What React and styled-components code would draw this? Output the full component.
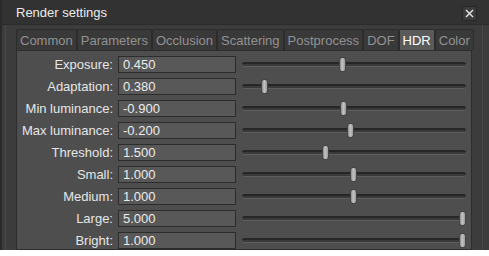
import React from "react";
import styled, { createGlobalStyle } from "styled-components";

const GlobalStyle = createGlobalStyle`
  html, body {
    margin: 0;
    padding: 0;
    background: #ffffff;
  }
  body {
    font-family: "Liberation Sans", Arial, sans-serif;
    font-size: 13px;
  }
`;

const Window = styled.div`
  width: 489px;
  height: 250px;
  overflow: hidden;
  background: #3c3c3c;
  border-left: 2px solid #2a2a2a;
  box-sizing: border-box;
  box-shadow: 0 3px 6px rgba(0, 0, 0, 0.55);
  display: flex;
  flex-direction: column;
`;

const TitleBar = styled.div`
  height: 24px;
  flex: none;
  display: flex;
  align-items: center;
  justify-content: space-between;
  padding: 0 12px 0 14px;
  background: #323232;
  border-bottom: 1px solid #2b2b2b;
  color: #ececec;
  font-size: 13px;
`;

const CloseButton = styled.div`
  width: 15px;
  height: 15px;
  margin-top: 3px;
  box-sizing: border-box;
  border: 1px solid #262626;
  border-radius: 2px;
  background: #3c3c3c;
  display: flex;
  align-items: center;
  justify-content: center;
`;

const Frame = styled.div`
  flex: 1;
  margin: 0 6px 0 3px;
  padding: 4px 10px 0 10px;
  border-left: 1px solid #4a4a4a;
  border-right: 1px solid #4a4a4a;
  display: flex;
  flex-direction: column;
`;

const TabBar = styled.div`
  display: flex;
  height: 21px;
  flex: none;
`;

const Tab = styled.div`
  padding: 0 3px;
  border: 1px solid #2c2c2c;
  border-bottom: none;
  border-radius: 2px 2px 0 0;
  background: ${(p) => (p.$active ? "#5a5a5a" : "#393939")};
  color: ${(p) => (p.$active ? "#ffffff" : "#929292")};
  display: flex;
  align-items: center;
  font-size: 13px;
`;

const Panel = styled.div`
  flex: 1;
  width: 456px;
  box-sizing: border-box;
  background: #4e4e4e;
  border: 1px solid #2d2d2d;
  padding: 5px 0 0 0;
  display: flex;
  flex-direction: column;
  gap: 5px;
`;

const Row = styled.div`
  display: flex;
  align-items: center;
  height: 17px;
`;

const Label = styled.div`
  width: 96px;
  margin-right: 5px;
  text-align: right;
  color: #e6e6e6;
  font-size: 13px;
`;

const Field = styled.div`
  width: 118px;
  height: 17px;
  margin-right: 6px;
  box-sizing: border-box;
  border: 1px solid #2c2c2c;
  background: #585858;
  color: #ececec;
  padding-left: 4px;
  display: flex;
  align-items: center;
  font-size: 13px;
`;

const Slider = styled.div`
  position: relative;
  width: 224px;
  height: 17px;
  display: flex;
  align-items: center;
`;

const Track = styled.div`
  width: 100%;
  height: 5px;
  box-sizing: border-box;
  border-radius: 3px;
  background: #3a3a3a;
  border-top: 2px solid #262626;
  border-bottom: 1px solid #5e5e5e;
`;

const Thumb = styled.div`
  position: absolute;
  top: 1px;
  left: ${(p) => p.$left}px;
  width: 7px;
  height: 15px;
  box-sizing: border-box;
  border-radius: 3px;
  border: 1px solid #444;
  background: linear-gradient(to right, #8a8a8a, #c4c4c4 45%, #9a9a9a);
`;

const tabs = [
  "Common",
  "Parameters",
  "Occlusion",
  "Scattering",
  "Postprocess",
  "DOF",
  "HDR",
  "Color",
];

const settings = [
  { label: "Exposure:", value: "0.450", pos: 97 },
  { label: "Adaptation:", value: "0.380", pos: 19 },
  { label: "Min luminance:", value: "-0.900", pos: 98 },
  { label: "Max luminance:", value: "-0.200", pos: 105 },
  { label: "Threshold:", value: "1.500", pos: 80 },
  { label: "Small:", value: "1.000", pos: 108 },
  { label: "Medium:", value: "1.000", pos: 108 },
  { label: "Large:", value: "5.000", pos: 217 },
  { label: "Bright:", value: "1.000", pos: 217 },
];

export default function App() {
  return (
    <>
      <GlobalStyle />
      <Window>
        <TitleBar>
          <span>Render settings</span>
          <CloseButton>
            <svg width="9" height="9" viewBox="0 0 9 9">
              <path
                d="M1 1 L8 8 M8 1 L1 8"
                stroke="#e8e8e8"
                strokeWidth="1.4"
                fill="none"
              />
            </svg>
          </CloseButton>
        </TitleBar>
        <Frame>
          <TabBar>
            {tabs.map((t) => (
              <Tab key={t} $active={t === "HDR"}>
                {t}
              </Tab>
            ))}
          </TabBar>
          <Panel>
            {settings.map((s) => (
              <Row key={s.label}>
                <Label>{s.label}</Label>
                <Field>{s.value}</Field>
                <Slider>
                  <Track />
                  <Thumb $left={s.pos} />
                </Slider>
              </Row>
            ))}
          </Panel>
        </Frame>
      </Window>
    </>
  );
}
